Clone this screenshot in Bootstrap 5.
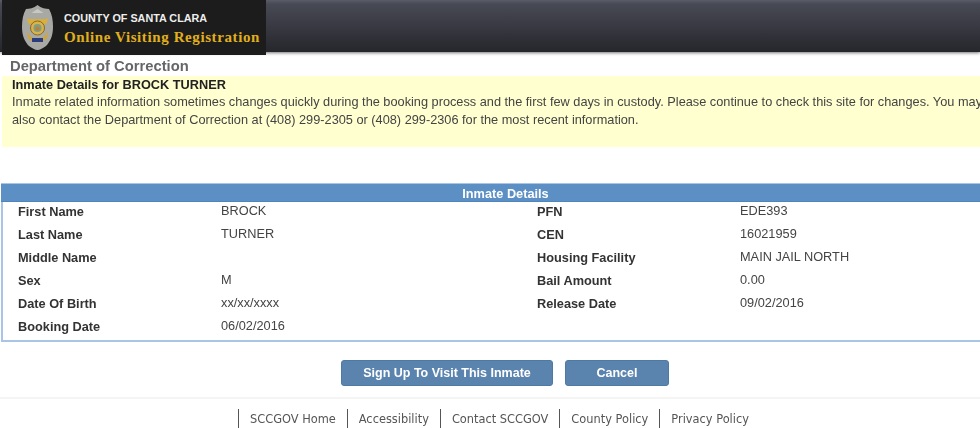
<!DOCTYPE html>
<html lang="en">
<head>
<meta charset="utf-8">
<title>Inmate Details</title>
<link href="https://cdn.jsdelivr.net/npm/bootstrap@5.3.0/dist/css/bootstrap.min.css" rel="stylesheet">
<style>
html,body{height:428px;overflow:hidden;background:#fff}
body{font-family:"Liberation Sans",Arial,sans-serif;font-size:12.75px;color:#333;width:980px}
.topbar{height:52px;background:linear-gradient(#5a5c68 0,#474954 8%,#3a3b44 45%,#26272c 100%);box-shadow:0 1px 3px #777;position:relative}
.brandbox{width:264px;height:55px;background:#1c1c1c;position:absolute;top:0;left:2px;padding-left:20px;gap:11px}
.brandtext{padding-top:3px}
.county{font-weight:700;font-size:10.8px;color:#eee;line-height:12px}
.ovr{font-family:"Liberation Serif",serif;font-weight:700;font-size:15px;letter-spacing:.6px;color:#e0b01c;line-height:18px;margin-top:4px;white-space:nowrap}
.pagebody{width:1010px;filter:blur(.3px)}
.dept{margin:6px 0 0 10px;font-size:14.75px;font-weight:700;color:#666;line-height:16px;height:18px}
.notice{margin-left:2px;height:71px;background:#ffffcf;padding:1px 0 0 10px;white-space:nowrap;overflow:hidden;line-height:18px;color:#444}
.notice strong{color:#222;display:block;line-height:16px}
.panel-box{margin:36px 0 0 1px;border-left:2px solid #a8c4e6;border-bottom:2px solid #a8c4e6;height:159px}
.panel-head{height:19px;margin-left:-2px;background:#5c90c4;border-top:1px solid #a8c4e6;border-bottom:1px solid #4f85bd;color:#fff;font-weight:700;text-align:center;line-height:19px}
.lbl{font-weight:700;color:#333}
.lrow{height:23px;line-height:19px}
.c1{width:218px;padding-left:15px}
.c2{width:316px}
.c3{width:203px}
.val{position:relative;top:-1px;color:#444}
.btn-blue{background:#5a84ae;color:#fff;font-weight:700;font-size:12.5px;height:26px;border:1px solid #4e79a5;border-radius:3px;line-height:24px;padding:0;text-align:center}
.btn-blue:hover{background:#5a84ae;color:#fff}
.b1{width:212px}
.b2{width:104px}
.btn-row{margin-top:18px;gap:12px}
.foot{margin-top:11px;border-top:2px solid #f4f4f4;padding-left:238px;height:40px;padding-top:10px}
.foot a{font-family:"DejaVu Sans",sans-serif;font-size:11.4px;color:#555;text-decoration:none;border-left:1px solid #555;padding:0 11px;line-height:20px;display:block;height:22px}
</style>
</head>
<body>
<header class="topbar">
  <div class="brandbox d-flex align-items-center">
    <svg width="31" height="45" viewBox="0 0 31 45" aria-hidden="true">
      <path d="M15.5 0C12 3 7 4 4 4 1 9 0 15 0 22c0 9 3 15 7 19 3 2 6 4 8.500 4s5.500-2 8.500-4c4-4 7-10 7-19 0-7-1-13-4-18-3 0-8-1-11.500-4z" fill="#a8a8a4"/>
      <path d="M15.500 4l-6 4h12z" fill="#c9c9c4"/>
      <path d="M5 13c3 2 6 1 10.500 1s7.500 1 10.500-1l-1 5c-2 1-3 2-4 2H10c-1 0-2-1-4-2z" fill="#d9b03c"/>
      <circle cx="15.500" cy="23" r="7" fill="#d8b24a" stroke="#8a6a22"/>
      <circle cx="15.500" cy="23" r="4" fill="#7f9c86"/>
      <path d="M15.500 21l3 3-3 2-3-2z" fill="#b5843a"/>
      <path d="M5 26c2 3 3 6 6 7h9c3-1 4-4 6-7l-1 7c-2 2-4 3-5 3h-9c-1 0-3-1-5-3z" fill="#cfa63a"/>
      <rect x="10" y="33" width="11" height="4" fill="#2c3c7a"/>
    </svg>
    <div class="brandtext">
      <div class="county">COUNTY OF SANTA CLARA</div>
      <div class="ovr">Online Visiting Registration</div>
    </div>
  </div>
</header>
<main class="pagebody">
  <div class="dept">Department of Correction</div>
  <div class="notice">
    <strong>Inmate Details for BROCK TURNER</strong>
    Inmate related information sometimes changes quickly during the booking process and the first few days in custody. Please continue to check this site for changes. You may<br>
    also contact the Department of Correction at (408) 299-2305 or (408) 299-2306 for the most recent information.
  </div>
  <section class="panel-box">
    <div class="panel-head">Inmate Details</div>
    <div class="d-flex lrow"><div class="c1 lbl">First Name</div><div class="c2 val">BROCK</div><div class="c3 lbl">PFN</div><div class="val">EDE393</div></div>
    <div class="d-flex lrow"><div class="c1 lbl">Last Name</div><div class="c2 val">TURNER</div><div class="c3 lbl">CEN</div><div class="val">16021959</div></div>
    <div class="d-flex lrow"><div class="c1 lbl">Middle Name</div><div class="c2 val"></div><div class="c3 lbl">Housing Facility</div><div class="val">MAIN JAIL NORTH</div></div>
    <div class="d-flex lrow"><div class="c1 lbl">Sex</div><div class="c2 val">M</div><div class="c3 lbl">Bail Amount</div><div class="val">0.00</div></div>
    <div class="d-flex lrow"><div class="c1 lbl">Date Of Birth</div><div class="c2 val">xx/xx/xxxx</div><div class="c3 lbl">Release Date</div><div class="val">09/02/2016</div></div>
    <div class="d-flex lrow"><div class="c1 lbl">Booking Date</div><div class="c2 val">06/02/2016</div></div>
  </section>
  <div class="d-flex justify-content-center btn-row">
    <a class="btn btn-blue b1" href="#">Sign Up To Visit This Inmate</a>
    <a class="btn btn-blue b2" href="#">Cancel</a>
  </div>
  <footer class="foot d-flex">
    <a href="#">SCCGOV Home</a><a href="#">Accessibility</a><a href="#">Contact SCCGOV</a><a href="#">County Policy</a><a href="#">Privacy Policy</a>
  </footer>
</main>
</body>
</html>
